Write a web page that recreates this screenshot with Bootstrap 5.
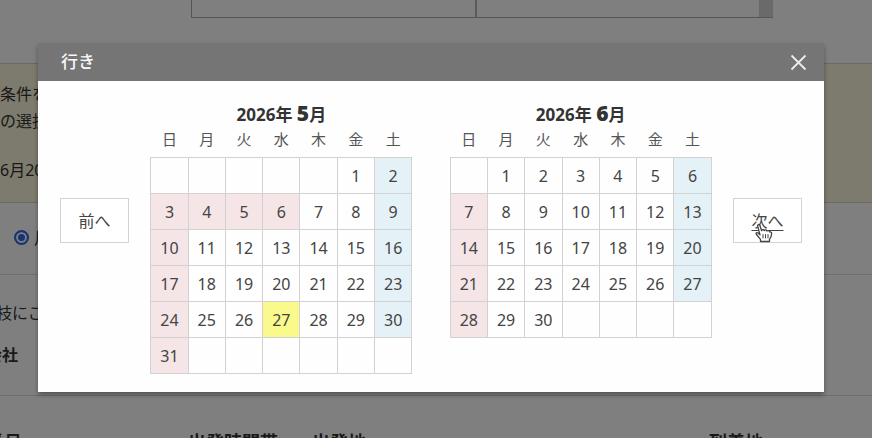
<!DOCTYPE html>
<html lang="ja">
<head>
<meta charset="utf-8">
<meta name="viewport" content="width=device-width, initial-scale=1">
<title>行き</title>
<link href="https://cdn.jsdelivr.net/npm/bootstrap@5.3.0/dist/css/bootstrap.min.css" rel="stylesheet">
<style>
body { font-family: "Noto Sans", "Noto Sans CJK JP", sans-serif; font-size: 16px; line-height: 24px; color: #333; overflow: hidden; height: 100vh; }
.page-under { margin-left: -14px; }
.result-frame { height: 18px; margin: 0 99px 45px 205px; border: 1px solid #aaa; border-width: 0 0 1px 1px; }
.result-frame .pane { border-right: 2px solid #b4b4b4; }
.result-frame .track { width: 14px; background: #d4d4d4; }
.notice { height: 140px; padding: 17px 14px; line-height: 27px; background: #faf6da; border: 1px solid #d8d4c0; border-width: 1px 0; }
.notice p + p { margin-top: 22px; }
.trip-row { height: 72px; padding: 0 0 2px 28px; border-bottom: 1px solid #ddd; }
.trip-row .form-check-input { width: 15px; height: 15px; margin: 0 5px 0 0; border: 2px solid #2c68e0; background: #2c68e0; box-shadow: inset 0 0 0 2px #fff; }
.company { height: 121px; padding-top: 26px; border-bottom: 1px solid #ddd; }
.company p { padding-left: 10px; margin-bottom: 18px; }
.col-heads { display: grid; grid-template-columns: 202px 124px 397px 1fr; font-size: 18px; font-weight: 700; padding-top: 34px; }
.modal-backdrop { opacity: .5; }
.date-modal { padding: 43px 48px 0 38px; overflow: hidden; }
.date-modal .modal-dialog { margin: 0; max-width: none; }
.date-modal .modal-content { border: 0; border-radius: 0; color: #444; background: none; box-shadow: 0 3px 5px rgba(0,0,0,.35); }
.date-modal .modal-header { height: 38px; padding: 0 17px 0 23px; border: 0; border-radius: 0; background: #757575; }
.date-modal .modal-title { font-size: 17px; line-height: 24px; font-weight: 500; color: #f8f8f8; }
.close-btn { width: 17px; height: 17px; padding: 0; border: 0; background: none; display: flex; }
.date-modal .modal-body { padding: 18px 22px; background: #fefefe; }
.step-btn { width: 69px; height: 45px; margin-top: 99px; padding: 0; border: 1px solid #d2d2d2; border-radius: 0; font-size: 16px; color: #444; background: #fff; }
.step-btn:hover { border-color: #bbb; }
.next-btn { text-decoration: underline; text-underline-offset: 3px; }
.month { width: 262px; table-layout: fixed; border-collapse: collapse; text-align: center; font-size: 16px; color: #444; margin: 0; }
.month caption { padding: 0; height: 28px; line-height: 28px; text-align: center; font-size: 17px; font-weight: 700; color: #333; }
.month caption b { font-size: 21px; }
.month th { height: 30px; padding: 0 0 5px; font-weight: 400; font-size: 15px; color: #555; }
.month td { height: 36px; padding: 2px 0 0; border: 1px solid #d2d2d2; line-height: 24px; }
.month .sun { background: #f5e5e6; }
.month .sat { background: #e4f1f6; }
.month .today { background: #fafa8c; }
.hand { position: absolute; left: 755px; top: 223px; z-index: 1060; pointer-events: none; }
</style>
<script src="https://cdn.jsdelivr.net/npm/bootstrap@5.3.0/dist/js/bootstrap.bundle.min.js"></script>
</head>
<body>
<main class="page-under">
  <div class="result-frame d-flex"><div class="pane flex-fill"></div><div class="flex-fill"></div><div class="track"></div></div>
  <section class="notice">
    <p class="mb-0">条件を<br>の選択</p>
    <p class="mb-0">6月20</p>
  </section>
  <div class="trip-row d-flex align-items-center">
    <input class="form-check-input" type="radio" name="trip" id="oneway" checked>
    <label for="oneway">片道</label>
  </div>
  <section class="company"><p>枝にこ</p><strong>会社</strong></section>
  <div class="col-heads"><span>番号</span><span>出発時間帯</span><span>出発地</span><span>到着地</span></div>
</main>
<div class="modal-backdrop show"></div>
<div class="modal date-modal d-block" tabindex="-1" role="dialog" aria-labelledby="dlgTitle">
  <div class="modal-dialog">
    <div class="modal-content">
      <div class="modal-header">
        <h1 class="modal-title" id="dlgTitle">行き</h1>
        <button type="button" class="close-btn" aria-label="閉じる"><svg width="17" height="17" viewBox="0 0 17 17" fill="none" stroke="#ececec" stroke-width="1.8"><path d="M1.500 1.500l14 14M15.500 1.500l-14 14"/></svg></button>
      </div>
      <div class="modal-body d-flex align-items-start justify-content-between">
        <button type="button" class="btn step-btn">前へ</button>
        <table class="month caption-top" id="may">
          <caption>2026年 <b>5</b>月</caption>
          <thead><tr><th>日</th><th>月</th><th>火</th><th>水</th><th>木</th><th>金</th><th>土</th></tr></thead>
          <tbody>
            <tr><td></td><td></td><td></td><td></td><td></td><td>1</td><td class="sat">2</td></tr>
            <tr><td class="sun">3</td><td class="sun">4</td><td class="sun">5</td><td class="sun">6</td><td>7</td><td>8</td><td class="sat">9</td></tr>
            <tr><td class="sun">10</td><td>11</td><td>12</td><td>13</td><td>14</td><td>15</td><td class="sat">16</td></tr>
            <tr><td class="sun">17</td><td>18</td><td>19</td><td>20</td><td>21</td><td>22</td><td class="sat">23</td></tr>
            <tr><td class="sun">24</td><td>25</td><td>26</td><td class="today">27</td><td>28</td><td>29</td><td class="sat">30</td></tr>
            <tr><td class="sun">31</td><td></td><td></td><td></td><td></td><td></td><td></td></tr>
          </tbody>
        </table>
        <table class="month caption-top ms-3" id="june">
          <caption>2026年 <b>6</b>月</caption>
          <thead><tr><th>日</th><th>月</th><th>火</th><th>水</th><th>木</th><th>金</th><th>土</th></tr></thead>
          <tbody>
            <tr><td></td><td>1</td><td>2</td><td>3</td><td>4</td><td>5</td><td class="sat">6</td></tr>
            <tr><td class="sun">7</td><td>8</td><td>9</td><td>10</td><td>11</td><td>12</td><td class="sat">13</td></tr>
            <tr><td class="sun">14</td><td>15</td><td>16</td><td>17</td><td>18</td><td>19</td><td class="sat">20</td></tr>
            <tr><td class="sun">21</td><td>22</td><td>23</td><td>24</td><td>25</td><td>26</td><td class="sat">27</td></tr>
            <tr><td class="sun">28</td><td>29</td><td>30</td><td></td><td></td><td></td><td></td></tr>
          </tbody>
        </table>
        <button type="button" class="btn step-btn next-btn">次へ</button>
      </div>
    </div>
  </div>
</div>
<svg class="hand" width="18" height="20" viewBox="0 0 18 20" fill="#fff" stroke="#444" stroke-width="1.3" stroke-linejoin="round" stroke-linecap="round"><path d="M5.500 18.500v-2.200L1.500 11.500C.5 10 1.800 9 3 10l2 1.800L2.700 3.200c-.4-1.800 1.700-2.300 2.200-.7l1.700 5.200c.5-1.400 2.200-1.300 2.600-.1.600-1.100 2.300-.9 2.700.4 .8-.8 2.600-.4 2.800 1 1.200-.4 2 .5 1.900 1.800-.1 2.400-.7 4-2.100 5.500v2.200z"/><path d="M8 11.500v3.500M10.500 11.500v3.500M13 11.500v3.500" stroke-width="1"/></svg>
</body>
</html>
